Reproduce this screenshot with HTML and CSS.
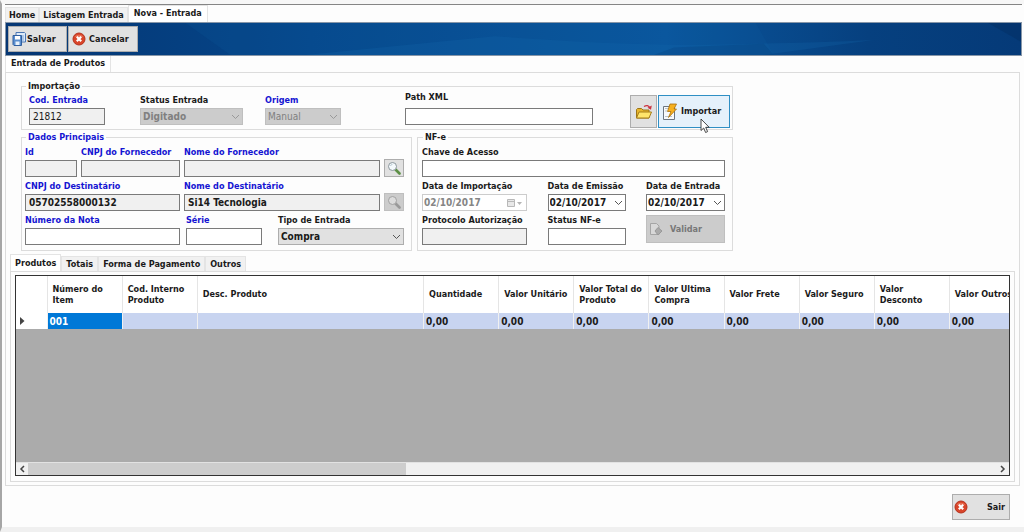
FILE: index.html
```
<!DOCTYPE html>
<html lang="pt-BR">
<head>
    <meta charset="UTF-8">
    <meta name="viewport" content="width=device-width, initial-scale=1.0">
    <title>Nova - Entrada</title>
    <link rel="stylesheet" href="styles.css">
</head>
<body>

    <nav class="tabs main-tabs">
        <button type="button" class="tab">Home</button>
        <button type="button" class="tab">Listagem Entrada</button>
        <button type="button" class="tab active">Nova - Entrada</button>
    </nav>

    <div class="toolbar">
        <svg class="toolbar-bg" viewBox="0 0 1018 34" preserveAspectRatio="none" aria-hidden="true">
            <path d="M180 0L225 34H770L752 0Z" fill="#1468ad" opacity=".12"/>
            <path d="M490 14Q620 24 700 23T870 18L760 34H300Z" fill="#1468ad" opacity=".25"/>
            <path d="M670 26L760 22L770 34H650Z" fill="#043b78" opacity=".25"/>
            <path d="M985 0L1018 20V0Z" fill="#032c60" opacity=".4"/>
        </svg>
        <button type="button" class="btn tool-btn">
            <svg width="14" height="14" viewBox="0 0 14 14">
                <path d="M4 .5h8.500l1 1v8.500H4z" fill="#dce9f8" stroke="#4a76b4"/>
                <path d="M1 3.500h8.500v10H2l-1-1z" fill="#5b8fd0" stroke="#315f9f"/>
                <path d="M3 4h5v3.500H3z" fill="#fff"/>
                <path d="M3.500 9.500h4V13h-4z" fill="#e8f1fb"/>
                <path d="M11 3v6" stroke="#7ea6d8"/>
            </svg>
            Salvar
        </button>
        <button type="button" class="btn tool-btn cancel-btn">
            <svg width="14" height="14" viewBox="0 0 14 14">
                <circle cx="7" cy="7" r="6" fill="#d9452a" stroke="#b5321d"/>
                <path d="M2.500 5a5 4 0 0 1 9 0" fill="#f08a70" opacity=".6"/>
                <path d="M4.800 4.800l4.400 4.400M9.200 4.800L4.800 9.200" stroke="#fff" stroke-width="2.200"/>
            </svg>
            Cancelar
        </button>
    </div>

    <nav class="tabs page-tabs">
        <button type="button" class="tab active">Entrada de Produtos</button>
    </nav>

    <main class="page">
        <form class="entry-form">
            <fieldset class="group import-group">
                <legend>Importação</legend>
                <div class="field cod">
                    <label class="required" for="cod">Cod. Entrada</label>
                    <input type="text" class="plain" id="cod" value="21812" readonly>
                </div>
                <div class="field status">
                    <label for="status">Status Entrada</label>
                    <select id="status" disabled><option>Digitado</option></select>
                </div>
                <div class="field origem">
                    <label class="required" for="origem">Origem</label>
                    <select class="plain" id="origem" disabled><option>Manual</option></select>
                </div>
                <div class="field path">
                    <label for="path">Path XML</label>
                    <input type="text" id="path">
                </div>
                <div class="import-actions">
                    <button type="button" class="btn open-btn" aria-label="Abrir arquivo">
                        <svg width="18" height="16" viewBox="0 0 18 16">
                            <path d="M1.500 14V5.500l1-1h4l1.500 1.500h6V14z" fill="#e8b62c" stroke="#9c7416"/>
                            <path d="M1.500 14l2.500-6h12.500l-2.500 6z" fill="#ffe46a" stroke="#a57c18"/>
                            <path d="M9 2.500q4-2.500 6 1.500" fill="none" stroke="#cc3340" stroke-width="1.300"/>
                            <path d="M16.800 1.500l-.8 4.300-3.500-2z" fill="#cc3340"/>
                        </svg>
                    </button>
                    <button type="button" class="btn import-btn">
                        <svg width="16" height="18" viewBox="0 0 16 18">
                            <path d="M1.500 3.500h11v13h-11z" fill="#f7f9fb" stroke="#6b7580"/>
                            <path d="M3 5.500h3M3 8h2M3 13.500h7" stroke="#b9c3cd"/>
                            <path d="M8 1h6.500l-2.500 5h2.500L6.500 14.500 9 8.500H5.500z" fill="#f6b01e" stroke="#a8700c" stroke-width=".8"/>
                        </svg>
                        Importar
                        <svg class="cursor" width="10" height="16" viewBox="0 0 10 16">
                            <path d="M1 1v11.500l2.700-2.500 1.900 4.500 2-.9-1.900-4.300h3.500z" fill="#fff" stroke="#333" stroke-width=".9"/>
                        </svg>
                    </button>
                </div>
            </fieldset>

            <div class="groups">
                <fieldset class="group main-group">
                    <legend class="required">Dados Principais</legend>
                    <div class="row">
                        <div class="field id">
                            <label class="required" for="id">Id</label>
                            <input type="text" id="id" readonly>
                        </div>
                        <div class="field cnpj-for">
                            <label class="required" for="cnpjFor">CNPJ do Fornecedor</label>
                            <input type="text" id="cnpjFor" readonly>
                        </div>
                        <div class="field grow">
                            <label class="required" for="nomeFor">Nome do Fornecedor</label>
                            <input type="text" id="nomeFor" readonly>
                        </div>
                        <button type="button" class="btn search-btn" aria-label="Buscar fornecedor">
                            <svg width="14" height="14" viewBox="0 0 14 14">
                                <path d="M8.500 8.500l4 4" stroke="#5d8f46" stroke-width="2.600" stroke-linecap="round"/>
                                <circle cx="5.500" cy="5.500" r="4" fill="#f4f9fc" stroke="#8b969c"/>
                                <path d="M3.500 5a2.200 2.200 0 0 1 2-1.700" fill="none" stroke="#b9c9d2"/>
                            </svg>
                        </button>
                    </div>
                    <div class="row">
                        <div class="field nota">
                            <label class="required" for="cnpjDest">CNPJ do Destinatário</label>
                            <input type="text" id="cnpjDest" value="05702558000132" readonly>
                        </div>
                        <div class="field grow">
                            <label class="required" for="nomeDest">Nome do Destinatário</label>
                            <input type="text" id="nomeDest" value="Si14 Tecnologia" readonly>
                        </div>
                        <button type="button" class="btn search-btn" aria-label="Buscar destinatário" disabled>
                            <svg width="14" height="14" viewBox="0 0 14 14">
                                <path d="M8.500 8.500l4 4" stroke="#999" stroke-width="2.600" stroke-linecap="round"/>
                                <circle cx="5.500" cy="5.500" r="4" fill="#dcdcdc" stroke="#a2a2a2"/>
                            </svg>
                        </button>
                    </div>
                    <div class="row">
                        <div class="field nota">
                            <label class="required" for="nota">Número da Nota</label>
                            <input type="text" id="nota">
                        </div>
                        <div class="field serie">
                            <label class="required" for="serie">Série</label>
                            <input type="text" id="serie">
                        </div>
                        <div class="field tipo">
                            <label for="tipo">Tipo de Entrada</label>
                            <select id="tipo"><option>Compra</option></select>
                        </div>
                    </div>
                </fieldset>

                <fieldset class="group nfe-group">
                    <legend>NF-e</legend>
                    <div class="field chave">
                        <label for="chave">Chave de Acesso</label>
                        <input type="text" id="chave">
                    </div>
                    <div class="field">
                        <label for="dataImp">Data de Importação</label>
                        <div class="date-box disabled">
                            <input type="text" id="dataImp" value="02/10/2017" disabled>
                            <svg width="18" height="10" viewBox="0 0 18 10" aria-hidden="true">
                                <path d="M1.500 1.500h7v7h-7z" fill="#e8e8e8" stroke="#b8b8b8"/>
                                <path d="M2 3.500h6" stroke="#b8b8b8"/>
                                <path d="M11 4h5l-2.500 3z" fill="#b5b5b5"/>
                            </svg>
                        </div>
                    </div>
                    <div class="field">
                        <label for="dataEmi">Data de Emissão</label>
                        <div class="date-box">
                            <input type="text" id="dataEmi" value="02/10/2017">
                            <svg width="9" height="6" viewBox="0 0 9 6" aria-hidden="true"><path d="M1 1l3.500 3.500L8 1" fill="none" stroke="#555"/></svg>
                        </div>
                    </div>
                    <div class="field">
                        <label for="dataEnt">Data de Entrada</label>
                        <div class="date-box">
                            <input type="text" id="dataEnt" value="02/10/2017">
                            <svg width="9" height="6" viewBox="0 0 9 6" aria-hidden="true"><path d="M1 1l3.500 3.500L8 1" fill="none" stroke="#555"/></svg>
                        </div>
                    </div>
                    <div class="field">
                        <label for="protocolo">Protocolo Autorização</label>
                        <input type="text" id="protocolo" readonly>
                    </div>
                    <div class="field">
                        <label for="statusNfe">Status NF-e</label>
                        <input type="text" id="statusNfe">
                    </div>
                    <button type="button" class="btn validate-btn" disabled>
                        <svg width="14" height="14" viewBox="0 0 14 14">
                            <path d="M1.500 1.500h6l2.500 2.500v8.500H1.500z" fill="#d8d8d8" stroke="#a5a5a5"/>
                            <path d="M9 5.500l4 3.500-4 4-3-4z" fill="#aaa" stroke="#999"/>
                        </svg>
                        Validar
                    </button>
                </fieldset>
            </div>
        </form>

        <nav class="tabs item-tabs">
            <button type="button" class="tab active">Produtos</button>
            <button type="button" class="tab">Totais</button>
            <button type="button" class="tab">Forma de Pagamento</button>
            <button type="button" class="tab">Outros</button>
        </nav>

        <section class="items">
            <div class="grid-box">
                <div class="grid-view">
                    <table class="grid">
                        <colgroup>
                            <col class="col-mark">
                            <col>
                            <col>
                            <col class="col-desc">
                            <col><col><col><col><col><col><col><col>
                        </colgroup>
                        <thead>
                            <tr>
                                <th></th>
                                <th>Número do<br>Item</th>
                                <th>Cod. Interno<br>Produto</th>
                                <th>Desc. Produto</th>
                                <th>Quantidade</th>
                                <th>Valor Unitário</th>
                                <th>Valor Total do<br>Produto</th>
                                <th>Valor Ultima<br>Compra</th>
                                <th>Valor Frete</th>
                                <th>Valor Seguro</th>
                                <th>Valor<br>Desconto</th>
                                <th>Valor Outros</th>
                            </tr>
                        </thead>
                        <tbody>
                            <tr>
                                <td class="mark"><svg width="5" height="8" viewBox="0 0 5 8"><path d="M0 0l4.500 4L0 8z" fill="#444"/></svg></td>
                                <td class="selected">001</td>
                                <td></td>
                                <td></td>
                                <td>0,00</td>
                                <td>0,00</td>
                                <td>0,00</td>
                                <td>0,00</td>
                                <td>0,00</td>
                                <td>0,00</td>
                                <td>0,00</td>
                                <td>0,00</td>
                            </tr>
                        </tbody>
                    </table>
                </div>
                <div class="scrollbar">
                    <svg width="12" height="8" viewBox="0 0 12 8"><path d="M8 1L5 4l3 3" fill="none" stroke="#444" stroke-width="1.500"/></svg>
                    <div class="track"><div class="thumb"></div></div>
                    <svg width="12" height="8" viewBox="0 0 12 8"><path d="M4 1l3 3-3 3" fill="none" stroke="#444" stroke-width="1.500"/></svg>
                </div>
            </div>
        </section>
    </main>

    <footer class="footer">
        <button type="button" class="btn exit-btn">
            <svg width="14" height="14" viewBox="0 0 14 14">
                <circle cx="7" cy="7" r="6" fill="#d9452a" stroke="#b5321d"/>
                <path d="M2.500 5a5 4 0 0 1 9 0" fill="#f08a70" opacity=".6"/>
                <path d="M4.800 4.800l4.400 4.400M9.200 4.800L4.800 9.200" stroke="#fff" stroke-width="2.200"/>
            </svg>
            Sair
        </button>
    </footer>

</body>
</html>
```
FILE: styles.css
```
* {
    margin: 0;
    padding: 0;
    box-sizing: border-box;
}

body {
    display: flex;
    flex-direction: column;
    min-height: 100vh;
    padding: 0 2px 0 3px;
    border-top: 4px solid #f7f7f7;
    border-left: 2px solid #a6a6a6;
    border-bottom: 5px solid #f0f0f0;
    background-color: #fdfdfd;
    font-family: 'DejaVu Sans Condensed', 'DejaVu Sans', sans-serif;
    font-stretch: condensed;
    font-size: 9px;
    line-height: 11px;
    font-weight: bold;
    color: #1a1a1a;
}

button,
input,
select {
    font: inherit;
    color: inherit;
}

svg {
    flex: none;
}

/* Tabs */
.tabs {
    display: flex;
    align-items: flex-end;
}

.tab {
    height: 15px;
    padding: 0 3px;
    border: 1px solid #e4e4e4;
    border-bottom: none;
    background-color: #f1f1f1;
    white-space: nowrap;
}

.tab.active {
    height: 17px;
    padding: 0 5px 1px;
    background-color: #fff;
}

.main-tabs {
    height: 18px;
    border-top: 1px solid #858585;
}

.page-tabs {
    height: 16px;
}

/* Toolbar */
.toolbar {
    position: relative;
    display: flex;
    gap: 1px;
    height: 34px;
    padding: 3px 2px;
    border: 1px solid #8796a8;
    background: linear-gradient(90deg, #053673 0%, #05468a 30%, #0a559c 65%, #06407f 85%, #053a78 100%);
}

.toolbar-bg {
    position: absolute;
    inset: 0;
    width: 100%;
    height: 100%;
}

.btn {
    position: relative;
    display: flex;
    align-items: center;
    border: 1px solid #adadad;
    background-color: #e1e1e1;
}

.btn:disabled {
    border-color: #bfbfbf;
    background-color: #ccc;
    color: #777;
}

.tool-btn {
    gap: 1px;
    width: 59px;
    height: 26px;
    padding-left: 3px;
}

.cancel-btn {
    gap: 3px;
    width: 70px;
}

/* Form */
.page {
    display: flex;
    flex: 1;
    flex-direction: column;
    margin-right: 2px;
    padding: 8px 4px 3px;
    border: 1px solid #dcdcdc;
}

.entry-form {
    width: 100%;
    max-width: 712px;
    margin-left: 11px;
}

.group {
    min-width: 0;
    border: 1px solid #dcdcdc;
}

.group legend {
    margin-left: 1px;
    padding: 0 2px;
}

.required {
    color: #1414d2;
}

.field {
    display: flex;
    flex-direction: column;
    gap: 2px;
}

.field label {
    white-space: nowrap;
}

.field input,
.field select {
    width: 100%;
    height: 17px;
    padding: 0 3px;
    border: 1px solid #7a7a7a;
    border-radius: 0;
    background-color: #fff;
    font-size: 10px;
}

.field input:read-only {
    background-color: #f0f0f0;
}

.field select {
    padding: 0 2px;
    border-color: #adadad;
    appearance: none;
    background: #e1e1e1 url("data:image/svg+xml,%3Csvg xmlns='http://www.w3.org/2000/svg' width='9' height='6'%3E%3Cpath d='M1 1l3.500 3.500L8 1' fill='none' stroke='%23555'/%3E%3C/svg%3E") no-repeat right 2px center;
}

.field select:disabled {
    border-color: #bfbfbf;
    background-color: #ccc;
    background-image: url("data:image/svg+xml,%3Csvg xmlns='http://www.w3.org/2000/svg' width='9' height='6'%3E%3Cpath d='M1 1l3.500 3.500L8 1' fill='none' stroke='%23999'/%3E%3C/svg%3E");
    color: #808080;
    opacity: 1;
}

.field .plain {
    font-weight: normal;
}

.import-group {
    display: flex;
    align-items: flex-end;
    padding: 0 2px 1px 3px;
}

.import-group .field {
    padding-bottom: 3px;
}

.cod {
    width: 76px;
    margin-left: 4px;
}

.status {
    width: 103px;
    margin-left: 35px;
}

.origem {
    width: 76px;
    margin-left: 22px;
}

.import-group .path {
    gap: 5px;
    width: 188px;
    margin-left: 64px;
}

.import-actions {
    display: flex;
    gap: 1px;
    margin-left: auto;
}

.import-actions .btn {
    height: 33px;
}

.open-btn {
    justify-content: center;
    width: 27px;
}

.import-btn {
    gap: 3px;
    width: 72px;
    padding-left: 3px;
    border-color: #2f8fc4;
    background-color: #e5f1fb;
}

.cursor {
    position: absolute;
    left: 41px;
    top: 22px;
}

.groups {
    display: grid;
    grid-template-columns: 391fr 316fr;
    gap: 5px;
    margin-top: 2px;
}

.main-group {
    display: flex;
    flex-direction: column;
    gap: 4px;
    padding: 4px 7px 5px 3px;
}

.nfe-group {
    display: grid;
    grid-template-columns: 105px 78px 79px;
    justify-content: space-between;
    gap: 4px;
    padding: 4px 7px 5px 4px;
}

.row {
    display: flex;
    align-items: flex-end;
    gap: 4px;
}

.id {
    width: 52px;
}

.cnpj-for {
    width: 99px;
}

.nota {
    width: 155px;
}

.serie {
    width: 76px;
    margin-left: 2px;
}

.tipo {
    width: 126px;
    margin-left: auto;
}

.grow {
    flex: 1;
}

.search-btn {
    justify-content: center;
    width: 20px;
    height: 18px;
}

.chave {
    grid-column: 1 / -1;
}

.date-box {
    display: flex;
    align-items: center;
    height: 17px;
    padding-right: 2px;
    border: 1px solid #7a7a7a;
    background-color: #fff;
}

.date-box.disabled {
    border-color: #ccc;
}

.date-box input {
    flex: 1;
    min-width: 0;
    height: 15px;
    padding: 0 1px;
    border: none;
}

.date-box input:disabled {
    background-color: #fff;
    color: #858585;
}

.validate-btn {
    gap: 7px;
    height: 28px;
    padding-left: 2px;
}

/* Items grid */
.item-tabs {
    margin-top: 3px;
}

.item-tabs .tab {
    padding: 0 4px;
}

.items {
    display: flex;
    flex: 1;
    padding: 3px 4px 5px;
    border: 1px solid #dcdcdc;
}

.grid-box {
    display: flex;
    flex: 1;
    flex-direction: column;
    min-width: 0;
    border: 1px solid #333;
    background-color: #ababab;
}

.grid-view {
    flex: 1;
    overflow: hidden;
}

.grid {
    width: 1009px;
    table-layout: fixed;
    border-collapse: collapse;
}

.grid col {
    width: 75px;
}

.grid .col-mark {
    width: 31px;
}

.grid .col-desc {
    width: 226px;
}

.grid th {
    height: 37px;
    padding-left: 5px;
    border-right: 1px solid #e5e5e5;
    background-color: #fff;
    text-align: left;
    white-space: nowrap;
}

.grid td {
    height: 16px;
    padding-left: 2px;
    border-right: 1px solid #f0f0f0;
    background-color: #c8d4f0;
    font-size: 10px;
}

.grid .mark {
    padding-left: 4px;
    background-color: #fff;
}

.grid .mark svg {
    display: block;
}

.grid .selected {
    background-color: #0078d7;
    color: #fff;
}

.scrollbar {
    display: flex;
    align-items: center;
    height: 13px;
    border-top: 1px solid #e2e2e2;
    background-color: #f0f0f0;
}

.track {
    flex: 1;
    height: 100%;
}

.thumb {
    width: 39%;
    height: 100%;
    background-color: #cdcdcd;
}

/* Footer */
.footer {
    display: flex;
    justify-content: flex-end;
    padding: 8px 12px 7px;
}

.exit-btn {
    justify-content: space-between;
    width: 58px;
    height: 26px;
    padding: 0 4px 0 1px;
}
```
